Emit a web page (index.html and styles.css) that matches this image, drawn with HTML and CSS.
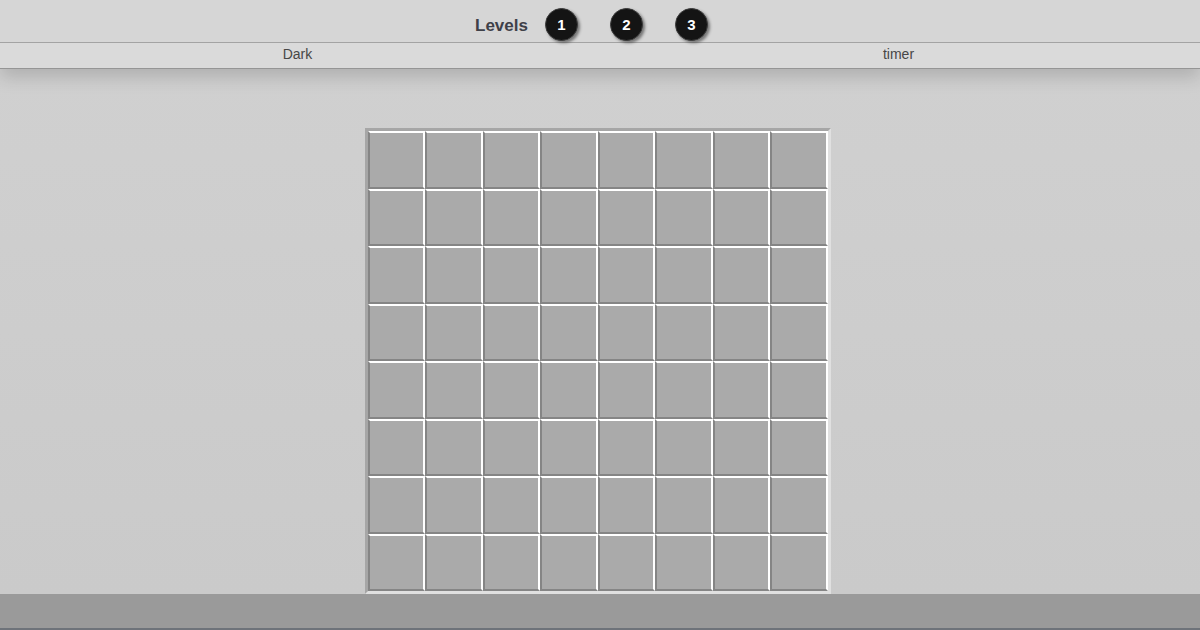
FILE: index.html
```html
<!DOCTYPE html>
<html>
<head>
<meta charset="utf-8">
<link rel="stylesheet" href="styles.css">
</head>
<body>
<div class="page">
  <header class="top">
    <span class="levels-label">Levels</span>
    <button class="level-btn">1</button>
    <button class="level-btn">2</button>
    <button class="level-btn">3</button>
  </header>
  <div class="subbar">
    <div class="subbar-cell">Dark</div>
    <div class="subbar-cell">timer</div>
  </div>
  <main class="main">
    <div class="board" id="board"></div>
  </main>
  <footer class="footer"></footer>
</div>
<script>
  var b = document.getElementById('board');
  for (var i = 0; i < 64; i++) {
    var c = document.createElement('div');
    c.className = 'cell';
    b.appendChild(c);
  }
</script>
</body>
</html>
```
FILE: styles.css
```css
* { box-sizing: border-box; }
html, body { margin: 0; padding: 0; }
body {
  font-family: "Liberation Sans", Arial, sans-serif;
  width: 1200px;
  height: 630px;
  overflow: hidden;
  background: #cdcdcd;
}
.page {
  display: flex;
  flex-direction: column;
  height: 630px;
}
.top {
  height: 43px;
  background: #d6d6d6;
  border-bottom: 1px solid #a3a3a3;
  display: flex;
  align-items: center;
  justify-content: center;
  padding-right: 1px;
  padding-top: 6px;
  position: relative;
  z-index: 2;
}
.levels-label {
  font-weight: bold;
  font-size: 17px;
  color: #3e4048;
  margin-right: 1px;
  margin-top: 4px;
}
.level-btn {
  width: 33px;
  height: 33px;
  border-radius: 50%;
  background: #141414;
  border: 1px solid #3a3a3a;
  color: #fff;
  font-family: "Liberation Sans", Arial, sans-serif;
  font-weight: bold;
  font-size: 15px;
  padding: 0;
  margin: 0 16px;
  box-shadow: 2px 2px 3px rgba(0,0,0,0.45);
  display: flex;
  align-items: center;
  justify-content: center;
}
.subbar {
  height: 26px;
  background: #dadada;
  border-bottom: 1px solid #959595;
  display: flex;
  box-shadow: 0 8px 18px rgba(0,0,0,0.16);
  position: relative;
  z-index: 1;
}
.subbar-cell {
  flex: 1;
  text-align: center;
  font-size: 14px;
  color: #474747;
  line-height: 23px;
  padding-right: 6px;
}
.subbar-cell + .subbar-cell {
  padding-right: 4px;
}
.main {
  flex: 1;
  background: linear-gradient(#d0d0d0, #cacaca);
  display: flex;
  justify-content: center;
  align-items: flex-end;
  padding-right: 5px;
}
.board {
  width: 466px;
  height: 466px;
  border: 3px solid;
  border-color: #a6a6a6 #e0e0e0 #e0e0e0 #a6a6a6;
  background: #aaa;
  display: grid;
  grid-template-columns: repeat(8, 1fr);
  grid-template-rows: repeat(8, 1fr);
}
.cell {
  background: #aaaaaa;
  border: 2px solid;
  border-color: #ffffff #ffffff #858585 #858585;
}
.footer {
  height: 36px;
  background: #9a9a9a;
  border-bottom: 2px solid #6e737a;
}
```
